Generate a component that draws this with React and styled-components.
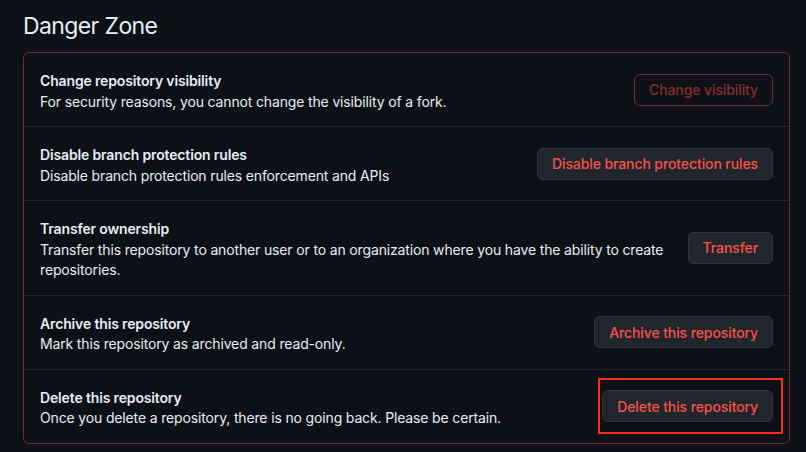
import React from "react";
import styled, { createGlobalStyle } from "styled-components";

const GlobalStyle = createGlobalStyle`
  html, body {
    margin: 0;
    background: #0d1117;
  }
  body {
    font-family: Inter, "Noto Sans", sans-serif;
    color: #e6edf3;
  }
`;

const Page = styled.main`
  padding: 8px 16px 0 23px;
`;

const Title = styled.h2`
  margin: 0 0 8px;
  font-size: 23px;
  font-weight: 400;
  line-height: 36px;
  letter-spacing: -0.6px;
  color: #e6edf3;
`;

const Box = styled.section`
  width: 767px;
  box-sizing: border-box;
  border: 1px solid #6e2a2d;
  border-radius: 6px;
`;

const Row = styled.div`
  display: flex;
  align-items: center;
  justify-content: space-between;
  gap: 16px;
  padding: 16px;
  & + & {
    border-top: 1px solid #21262d;
  }
`;

const Text = styled.div`
  flex: 1;
  padding-top: 2px;
  margin-bottom: -2px;
  font-size: 14px;
  line-height: 20.5px;
  letter-spacing: -0.15px;
  strong {
    display: block;
    font-weight: 600;
  }
  p {
    margin: 0;
  }
`;

const Button = styled.button`
  flex-shrink: 0;
  height: 32px;
  padding: 0 14px;
  border-radius: 6px;
  font-family: inherit;
  font-size: 14px;
  font-weight: 500;
  letter-spacing: -0.1px;
  white-space: nowrap;
  cursor: pointer;
  background: ${(p) => (p.disabled ? "transparent" : "#21262d")};
  border: 1px solid ${(p) => (p.disabled ? "#6e2a2d" : "#30363d")};
  color: ${(p) => (p.disabled ? "#8a2e2f" : "#f85149")};
`;

const Highlight = styled.div`
  position: relative;
  &::after {
    content: "";
    position: absolute;
    top: -12px;
    left: -4px;
    right: -10px;
    bottom: -12px;
    border: 2px solid #ff2a1a;
    pointer-events: none;
  }
`;

const items = [
  {
    title: "Change repository visibility",
    desc: "For security reasons, you cannot change the visibility of a fork.",
    action: "Change visibility",
    disabled: true,
  },
  {
    title: "Disable branch protection rules",
    desc: "Disable branch protection rules enforcement and APIs",
    action: "Disable branch protection rules",
  },
  {
    title: "Transfer ownership",
    desc: "Transfer this repository to another user or to an organization where you have the ability to create repositories.",
    action: "Transfer",
  },
  {
    title: "Archive this repository",
    desc: "Mark this repository as archived and read-only.",
    action: "Archive this repository",
  },
  {
    title: "Delete this repository",
    desc: "Once you delete a repository, there is no going back. Please be certain.",
    action: "Delete this repository",
    marked: true,
  },
];

export default function App() {
  return (
    <>
      <GlobalStyle />
      <Page>
        <Title>Danger Zone</Title>
        <Box>
          {items.map((item) => {
            const btn = <Button disabled={item.disabled}>{item.action}</Button>;
            return (
              <Row key={item.title}>
                <Text>
                  <strong>{item.title}</strong>
                  <p>{item.desc}</p>
                </Text>
                {item.marked ? <Highlight>{btn}</Highlight> : btn}
              </Row>
            );
          })}
        </Box>
      </Page>
    </>
  );
}
